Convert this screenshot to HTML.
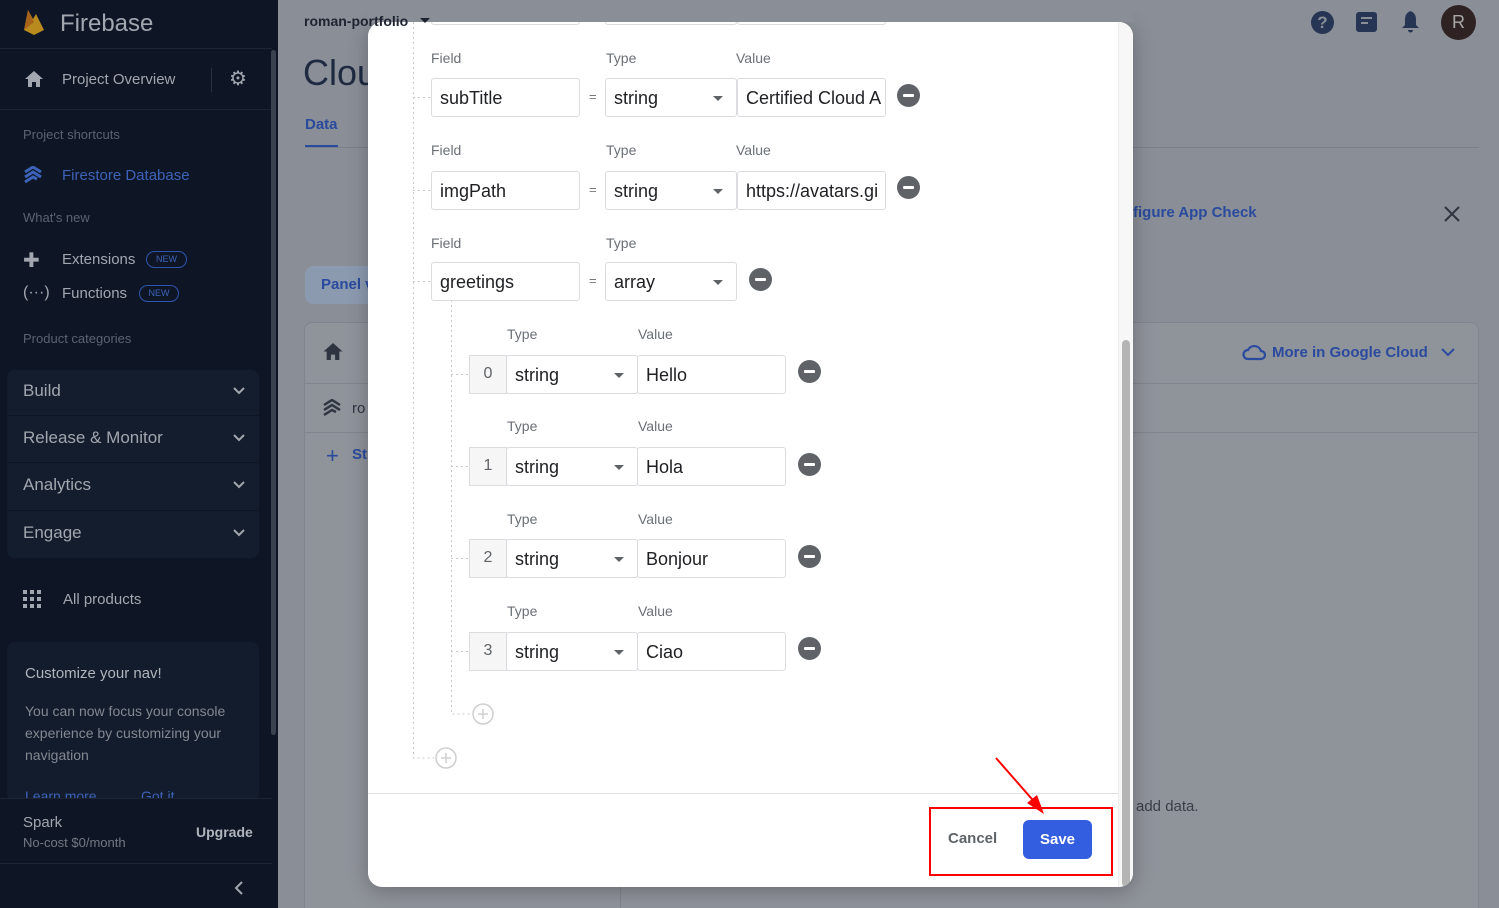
<!DOCTYPE html>
<html><head><meta charset="utf-8"><style>
*{box-sizing:border-box;margin:0;padding:0}
html,body{width:1499px;height:908px;overflow:hidden}
body{background:#8a8e96;font-family:"Liberation Sans",Roboto,sans-serif;position:relative}
.a{position:absolute;white-space:nowrap}
.sb{position:absolute;left:0;top:0;width:278px;height:908px;background:#0e1626}
.lbl{font-size:14px;color:#6b6f76}
.inp{position:absolute;height:39px;border:1px solid #dadce0;border-radius:3px;background:#fff;font-size:18px;color:#202124;padding:9px 8px;white-space:nowrap;overflow:hidden}
.sel:after{content:"";position:absolute;right:13px;top:17px;border-left:5px solid transparent;border-right:5px solid transparent;border-top:5px solid #5f6368}
.idx{position:absolute;width:38px;height:39px;background:#f6f6f6;border:1px solid #dadce0;font-size:16px;color:#5f6368;text-align:center;padding-top:9px}
.minus{position:absolute;width:23px;height:23px;border-radius:50%;background:#5f6368}
.minus:after{content:"";position:absolute;left:6px;top:10px;width:11px;height:3px;background:#fff;border-radius:1px}
.eq{position:absolute;font-size:13px;color:#777}
.nav{font-size:15px;color:#a2a6ae}
</style></head><body>
<div class="sb">
 <svg class="a" style="left:22px;top:8px" width="24" height="28" viewBox="0 0 24 28"><path d="M2 22 L6 2 L11 11 L14 6 L22 22 L12 27 Z" fill="#b98a1e"/><path d="M2 22 L6 2 L12 14 Z" fill="#a8621a"/></svg>
 <div class="a" style="left:60px;top:10px;font-size:24px;color:#a2a6ae">Firebase</div>
 <div class="a" style="left:0;top:48px;width:272px;height:1px;background:#1d2535"></div>
 <svg class="a" style="left:24px;top:70px" width="20" height="18" viewBox="0 0 20 18"><path d="M10 1 L1 9 H4 V17 H8 V12 H12 V17 H16 V9 H19 Z" fill="#a2a6ae"/></svg>
 <div class="a nav" style="left:62px;top:71px">Project Overview</div>
 <div class="a" style="left:211px;top:68px;width:1px;height:24px;background:#2a3242"></div>
 <div class="a" style="left:229px;top:66px;font-size:20px;color:#a2a6ae">⚙</div>
 <div class="a" style="left:0;top:109px;width:272px;height:1px;background:#1d2535"></div>
 <div class="a" style="left:23px;top:127px;font-size:13px;color:#5b6270">Project shortcuts</div>
 <svg class="a" style="left:24px;top:166px" width="18" height="18" viewBox="0 0 18 18"><path d="M1 6 L9 1 L17 6 M1 11 L9 6 L17 11 M1 16 L9 11 L13 13" stroke="#3d63b8" stroke-width="3" fill="none"/></svg>
 <div class="a" style="left:62px;top:167px;font-size:15px;color:#3d63b8">Firestore Database</div>
 <div class="a" style="left:23px;top:210px;font-size:13px;color:#5b6270">What's new</div>
 <div class="a" style="left:23px;top:248px;font-size:20px;color:#a2a6ae">✚</div>
 <div class="a nav" style="left:62px;top:251px">Extensions</div>
 <div class="a" style="left:146px;top:251px;width:41px;height:17px;border:1.5px solid #2f55b0;border-radius:9px;font-size:9px;color:#3d63b8;text-align:center;line-height:14px">NEW</div>
 <div class="a" style="left:23px;top:284px;font-size:16px;color:#a2a6ae">(···)</div>
 <div class="a nav" style="left:62px;top:285px">Functions</div>
 <div class="a" style="left:139px;top:285px;width:40px;height:17px;border:1.5px solid #2f55b0;border-radius:9px;font-size:9px;color:#3d63b8;text-align:center;line-height:14px">NEW</div>
 <div class="a" style="left:23px;top:331px;font-size:13px;color:#5b6270">Product categories</div>
 <div class="a" style="left:7px;top:370px;width:252px;height:188px;background:#141d2e;border-radius:8px"></div>
 <div class="a" style="left:7px;top:415px;width:252px;height:1px;background:#0e1626"></div>
 <div class="a" style="left:7px;top:462px;width:252px;height:1px;background:#0e1626"></div>
 <div class="a" style="left:7px;top:510px;width:252px;height:1px;background:#0e1626"></div>
 <div class="a" style="left:23px;top:381px;font-size:17px;color:#a2a6ae">Build</div>
 <div class="a" style="left:23px;top:428px;font-size:17px;color:#a2a6ae">Release &amp; Monitor</div>
 <div class="a" style="left:23px;top:475px;font-size:17px;color:#a2a6ae">Analytics</div>
 <div class="a" style="left:23px;top:523px;font-size:17px;color:#a2a6ae">Engage</div>
 <svg class="a" style="left:232px;top:386px" width="14" height="160" viewBox="0 0 14 160"><g stroke="#a2a6ae" stroke-width="2" fill="none"><path d="M2 2 L7 7 L12 2"/><path d="M2 49 L7 54 L12 49"/><path d="M2 96 L7 101 L12 96"/><path d="M2 144 L7 149 L12 144"/></g></svg>
 <svg class="a" style="left:23px;top:590px" width="18" height="18"><g fill="#a2a6ae"><rect x="0" y="0" width="4" height="4"/><rect x="7" y="0" width="4" height="4"/><rect x="14" y="0" width="4" height="4"/><rect x="0" y="7" width="4" height="4"/><rect x="7" y="7" width="4" height="4"/><rect x="14" y="7" width="4" height="4"/><rect x="0" y="14" width="4" height="4"/><rect x="7" y="14" width="4" height="4"/><rect x="14" y="14" width="4" height="4"/></g></svg>
 <div class="a nav" style="left:63px;top:591px">All products</div>
 <div class="a" style="left:7px;top:642px;width:252px;height:160px;background:#131c2d;border-radius:8px"></div>
 <div class="a" style="left:25px;top:665px;font-size:15px;color:#b0b4bb">Customize your nav!</div>
 <div class="a" style="left:25px;top:700px;font-size:14px;line-height:22px;color:#838891;white-space:normal;width:220px">You can now focus your console experience by customizing your navigation</div>
 <div class="a" style="left:25px;top:788px;font-size:14px;color:#3d63b8">Learn more</div>
 <div class="a" style="left:141px;top:788px;font-size:14px;color:#3d63b8">Got it</div>
 <div class="a" style="left:0;top:798px;width:272px;height:66px;background:#0e1626;border-top:1px solid #1d2535;border-bottom:1px solid #1d2535"></div>
 <div class="a" style="left:23px;top:814px;font-size:15px;color:#a2a6ae">Spark</div>
 <div class="a" style="left:23px;top:835px;font-size:13px;color:#737882">No-cost $0/month</div>
 <div class="a" style="left:196px;top:824px;font-size:14px;color:#b0b4bb;font-weight:bold">Upgrade</div>
 <svg class="a" style="left:234px;top:881px" width="10" height="14"><path d="M8 1 L2 7 L8 13" stroke="#a2a6ae" stroke-width="2" fill="none"/></svg>
 <div class="a" style="left:271px;top:50px;width:5px;height:685px;background:#3a4250;border-radius:3px"></div>
</div>
<div class="a" style="left:303px;top:52px;font-size:36px;color:#1d2a40">Cloud</div>
<div class="a" style="left:305px;top:116px;font-size:15px;font-weight:bold;color:#2a4a9e">Data</div>
<div class="a" style="left:305px;top:145px;width:33px;height:3px;background:#2a4a9e"></div>
<div class="a" style="left:305px;top:147px;width:1174px;height:1px;background:#7a7f88"></div>
<div class="a" style="left:1133px;top:204px;font-size:15px;font-weight:bold;color:#2a4a9e">figure App Check</div>
<svg class="a" style="left:1444px;top:206px" width="16" height="16"><path d="M1 1 L15 15 M15 1 L1 15" stroke="#2e3440" stroke-width="2"/></svg>
<div class="a" style="left:305px;top:266px;width:70px;height:38px;background:#8c9ab0;border-radius:8px;font-size:15px;font-weight:bold;color:#2a4a9e;padding:10px 16px">Panel v</div>
<div class="a" style="left:304px;top:322px;width:1175px;height:600px;background:#8f939a;border:1px solid #80848c;border-radius:8px"></div>
<div class="a" style="left:304px;top:383px;width:1175px;height:1px;background:#80848c"></div>
<div class="a" style="left:304px;top:432px;width:1175px;height:1px;background:#80848c"></div>
<div class="a" style="left:620px;top:432px;width:1px;height:476px;background:#80848c"></div>
<svg class="a" style="left:322px;top:342px" width="22" height="19" viewBox="0 0 20 18"><path d="M10 1 L1 9 H4 V17 H8 V12 H12 V17 H16 V9 H19 Z" fill="#2e3440"/></svg>
<svg class="a" style="left:323px;top:399px" width="18" height="18" viewBox="0 0 18 18"><path d="M1 6 L9 1 L17 6 M1 11 L9 6 L17 11 M1 16 L9 11 L13 13" stroke="#2e3440" stroke-width="2.5" fill="none"/></svg>
<div class="a" style="left:352px;top:400px;font-size:15px;color:#2e3440">ro</div>
<div class="a" style="left:326px;top:443px;font-size:22px;color:#2a4a9e">+</div>
<div class="a" style="left:352px;top:446px;font-size:15px;font-weight:bold;color:#2a4a9e">St</div>
<svg class="a" style="left:1242px;top:343px" width="24" height="18" viewBox="0 0 24 18"><path d="M6 16 H19 A4 4 0 0 0 19 8 A7 7 0 0 0 6 7 A4.5 4.5 0 0 0 6 16 Z" stroke="#2a4a9e" stroke-width="2.2" fill="none"/></svg>
<div class="a" style="left:1272px;top:344px;font-size:15px;font-weight:bold;color:#2a4a9e">More in Google Cloud</div>
<svg class="a" style="left:1441px;top:348px" width="14" height="9"><path d="M1 1 L7 7 L13 1" stroke="#2a4a9e" stroke-width="2" fill="none"/></svg>
<div class="a" style="left:1136px;top:798px;font-size:15px;color:#3a3f48">add data.</div>
<div class="a" style="left:1311px;top:11px;width:23px;height:23px;border-radius:50%;background:#253553;color:#8a8e96;font-size:17px;font-weight:bold;text-align:center;line-height:23px">?</div>
<div class="a" style="left:1356px;top:12px;width:21px;height:20px;border-radius:3px;background:#253553"></div>
<div class="a" style="left:1361px;top:17px;width:11px;height:2px;background:#8a8e96"></div>
<div class="a" style="left:1361px;top:22px;width:7px;height:2px;background:#8a8e96"></div>
<svg class="a" style="left:1401px;top:10px" width="19" height="23" viewBox="0 0 19 23"><path d="M9.5 1 C5 3 4 6 4 10 V15 L1 18 H18 L15 15 V10 C15 6 14 3 9.5 1 Z M7 20 H12 A2.5 2.5 0 0 1 7 20 Z" fill="#253553"/></svg>
<div class="a" style="left:1441px;top:5px;width:35px;height:35px;border-radius:50%;background:#2f2222;color:#a8a8a8;font-size:18px;text-align:center;line-height:35px">R</div>
<!-- modal -->
<div class="a" style="left:368px;top:22px;width:765px;height:865px;background:#fff;border-radius:14px;overflow:hidden;box-shadow:0 4px 20px rgba(0,0,0,.25)">
 <div class="a" style="left:0;top:771px;width:750px;height:1px;background:#e0e0e0"></div>
 <div class="a" style="left:750px;top:0;width:15px;height:865px;background:#f7f7f7;border-left:1px solid #ececec"></div>
 <div class="a" style="left:754px;top:318px;width:8px;height:547px;background:#b4b4b4;border-radius:4px"></div>
</div>
<svg class="a" style="left:0;top:0" width="1499" height="908"><g stroke="#c8c8c8" stroke-width="1" stroke-dasharray="2,3" fill="none">
<path d="M413.5 22 V758 H434"/><path d="M413 97.5 H430 M413 190.5 H430 M413 281.5 H430"/>
<path d="M451.5 300 V714 H472"/><path d="M451 374.5 H468 M451 466.5 H468 M451 558.5 H468 M451 651.5 H468"/></g>
<g stroke="#cfcfcf" stroke-width="1.5" fill="none"><circle cx="483" cy="714" r="10"/><path d="M478 714 H488 M483 709 V719"/><circle cx="446" cy="758" r="10"/><path d="M441 758 H451 M446 753 V763"/></g></svg>
<div class="inp" style="left:431px;top:-14px;width:149px"></div><div class="inp" style="left:605px;top:-14px;width:132px"></div><div class="inp" style="left:737px;top:-14px;width:149px"></div>
<div class="a" style="left:368px;top:0;width:765px;height:22px;background:#8a8e96"></div>
<div class="a" style="left:304px;top:13px;font-size:14px;font-weight:bold;color:#1d2330">roman-portfolio</div>
<div class="a" style="left:420px;top:18px;border-left:5px solid transparent;border-right:5px solid transparent;border-top:5px solid #1d2330"></div>

<div class="a lbl" style="left:431px;top:50px">Field</div><div class="a lbl" style="left:606px;top:50px">Type</div><div class="a lbl" style="left:736px;top:50px">Value</div>
<div class="inp" style="left:431px;top:78px;width:149px">subTitle</div><div class="eq" style="left:589px;top:89px">=</div>
<div class="inp sel" style="left:605px;top:78px;width:132px">string</div><div class="inp" style="left:737px;top:78px;width:149px">Certified Cloud A</div><div class="minus" style="left:897px;top:84px"></div>

<div class="a lbl" style="left:431px;top:142px">Field</div><div class="a lbl" style="left:606px;top:142px">Type</div><div class="a lbl" style="left:736px;top:142px">Value</div>
<div class="inp" style="left:431px;top:171px;width:149px">imgPath</div><div class="eq" style="left:589px;top:182px">=</div>
<div class="inp sel" style="left:605px;top:171px;width:132px">string</div><div class="inp" style="left:737px;top:171px;width:149px">https://avatars.gi</div><div class="minus" style="left:897px;top:176px"></div>

<div class="a lbl" style="left:431px;top:235px">Field</div><div class="a lbl" style="left:606px;top:235px">Type</div>
<div class="inp" style="left:431px;top:262px;width:149px">greetings</div><div class="eq" style="left:589px;top:273px">=</div>
<div class="inp sel" style="left:605px;top:262px;width:132px">array</div><div class="minus" style="left:749px;top:268px"></div>

<div class="a lbl" style="left:507px;top:326px">Type</div><div class="a lbl" style="left:638px;top:326px">Value</div>
<div class="idx" style="left:469px;top:355px">0</div><div class="inp sel" style="left:506px;top:355px;width:132px">string</div><div class="inp" style="left:637px;top:355px;width:149px">Hello</div><div class="minus" style="left:798px;top:360px"></div>

<div class="a lbl" style="left:507px;top:418px">Type</div><div class="a lbl" style="left:638px;top:418px">Value</div>
<div class="idx" style="left:469px;top:447px">1</div><div class="inp sel" style="left:506px;top:447px;width:132px">string</div><div class="inp" style="left:637px;top:447px;width:149px">Hola</div><div class="minus" style="left:798px;top:453px"></div>

<div class="a lbl" style="left:507px;top:511px">Type</div><div class="a lbl" style="left:638px;top:511px">Value</div>
<div class="idx" style="left:469px;top:539px">2</div><div class="inp sel" style="left:506px;top:539px;width:132px">string</div><div class="inp" style="left:637px;top:539px;width:149px">Bonjour</div><div class="minus" style="left:798px;top:545px"></div>

<div class="a lbl" style="left:507px;top:603px">Type</div><div class="a lbl" style="left:638px;top:603px">Value</div>
<div class="idx" style="left:469px;top:632px">3</div><div class="inp sel" style="left:506px;top:632px;width:132px">string</div><div class="inp" style="left:637px;top:632px;width:149px">Ciao</div><div class="minus" style="left:798px;top:637px"></div>

<div class="a" style="left:948px;top:830px;font-size:15px;font-weight:bold;color:#5f6368">Cancel</div>
<div class="a" style="left:1023px;top:820px;width:69px;height:39px;background:#345ee0;border-radius:6px;color:#fff;font-size:15px;font-weight:bold;text-align:center;line-height:39px">Save</div>
<div class="a" style="left:929px;top:807px;width:184px;height:69px;border:2px solid #f00"></div>
<svg class="a" style="left:0;top:0" width="1499" height="908"><path d="M996 758 L1038 806" stroke="#f00" stroke-width="2"/><path d="M1044 814 L1027 803 L1037 795 Z" fill="#f00"/></svg>
</body></html>
